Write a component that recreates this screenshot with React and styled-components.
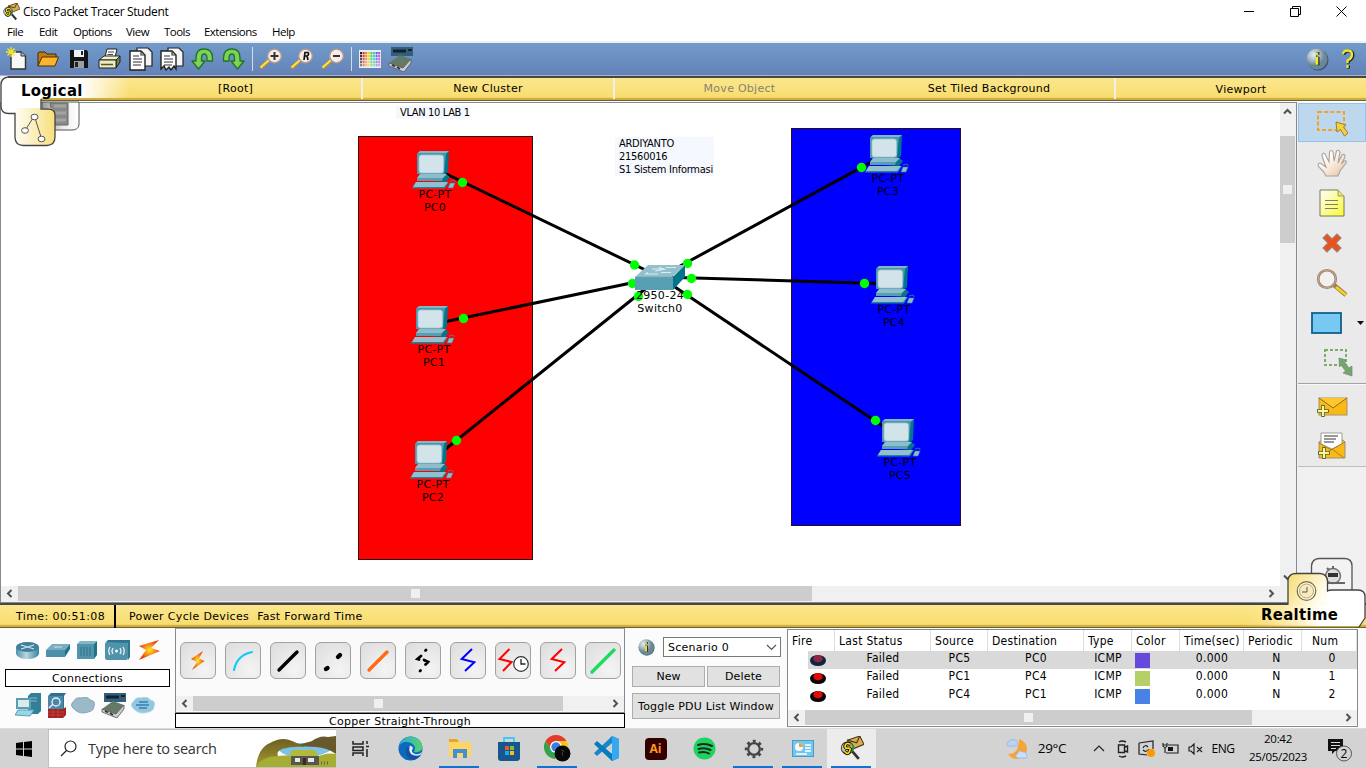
import React from "react";
import styled, { createGlobalStyle } from "styled-components";

const verdana = `"DejaVu Sans", Verdana, sans-serif`;
const tahoma = `"DejaVu Sans Condensed", "DejaVu Sans", Tahoma, sans-serif`;
const segoe = `"Open Sans", "Segoe UI", sans-serif`;

const Global = createGlobalStyle`
  *{box-sizing:border-box}
  html,body{margin:0;padding:0;overflow:hidden;background:#f0f0f0}
  svg{display:block;flex:none}
`;

const Desktop = styled.div`
  width: 1366px; height: 768px; display: flex; flex-direction: column;
  position: relative; overflow: hidden; background: #f0f0f0; color: #000;
  font: 11px/13px ${verdana}; letter-spacing: .27px;
`;
const Text = styled.span`
  white-space: nowrap; letter-spacing: ${p => p.$ls || 0}px;
`;

/* ---------- window chrome ---------- */
const TitleBar = styled.header`
  height: 23px; background: #fff; display: flex; align-items: center; padding: 0 2px;
  font: 12px/16px ${segoe};
`;
const AppName = styled(Text)`margin-left: 3px; flex: 1;`;
const WindowButton = styled.div`
  width: 46px; height: 21px; display: flex; align-items: center; justify-content: center;
`;
const MenuBar = styled.nav`
  height: 20px; background: #fff; border-bottom: 2px solid #f0f0f0; display: flex;
  padding-left: 7px; font: 11.5px/18px ${segoe};
`;
const MenuItem = styled.span`width: ${p => p.$w}px; letter-spacing: ${p => p.$ls || 0}px; white-space: nowrap;`;
const Toolbar = styled.div`
  height: 33px; display: flex; align-items: center; padding: 0 2px 0 1px;
  background: linear-gradient(#729bc9, #6382b9);
  border-bottom: 1px solid #a9b4c4;
`;
const ToolButton = styled.div`
  width: 31px; height: 31px; display: flex; align-items: center; justify-content: center;
`;
const ToolSeparator = styled.div`width: 6px; height: 24px; display: flex; justify-content: center; &::after{content:"";width:1px;background:#d4dbe6}`;
const Spacer = styled.div`flex: 1;`;

/* ---------- yellow bars ---------- */
const GoldBar = styled.div`
  display: flex; height: 25px; border-top: 2px solid #474643; border-bottom: 1px solid #6d6134;
  background: linear-gradient(#fbe68e 0, #fae17c 50%, #f8dd6e 88%, #d2b040 92%, #cdaa3c 100%);
`;
const BarCell = styled.div`
  width: ${p => p.$w}px; height: 21px; display: flex; justify-content: center; padding-top: ${p => p.$pt || 4}px;
  border-right: ${p => p.$last ? 0 : 2}px solid #f2efe8; color: ${p => p.$dim ? "#858474" : "#000"};
`;
const LogicalTab = styled.div`position: absolute; left: 0; top: 75px;`;
const TabName = styled.div`
  position: absolute; left: ${p => p.$x}px; top: ${p => p.$y}px; font: bold 16.5px/19px ${tahoma}; letter-spacing: .35px;
`;
const RealtimeTab = styled.div`position: absolute; left: 1240px; top: 556px;`;

/* ---------- workspace ---------- */
const Workspace = styled.main`
  height: 502px; display: flex; border-top: 1px solid #fff;
`;
const CanvasFrame = styled.section`
  width: 1297px; border: 1px solid #848a93; display: grid;
  grid-template: 483px 15px / 1279px 16px;
`;
const Canvas = styled.div`position: relative; background: #fff; overflow: hidden;`;
const Layer = styled.svg`position: absolute; left: 0; top: 0;`;
const Zone = styled.div`
  position: absolute; left: ${p => p.$x - 1}px; top: ${p => p.$y - 103}px; width: ${p => p.$w}px; height: ${p => p.$h}px;
  background: ${p => p.$c}; border: 1px solid #2b1010;
`;
const Node = styled.div`
  position: absolute; left: ${p => p.$x - 1}px; top: ${p => p.$y - 103}px; width: 50px;
`;
const NodeLabel = styled.div`
  width: 60px; margin: -1px 0 0 ${p => p.$dx}px; text-align: center; line-height: 13px; white-space: pre;
`;
const Note = styled.div`
  position: absolute; left: ${p => p.$x - 1}px; top: ${p => p.$y - 103}px; width: ${p => p.$w}px; padding-left: 4px;
  background: #f6f8ff; font: 11px/13px ${tahoma}; white-space: pre; letter-spacing: ${p => p.$ls}px;
`;

/* ---------- scroll bars ---------- */
const Track = styled.div`
  display: flex; background: #f0f0f0; align-items: stretch;
  flex-direction: ${p => p.$v ? "column" : "row"};
  ${p => p.$v ? "width:15px" : "height:15px"};
`;
const Thumb = styled.div`
  ${p => p.$v ? "height" : "width"}: ${p => p.$size}px; background: #cdcdcd;
  margin-top: ${p => p.$from || 0}px;
  display: flex; align-items: center; justify-content: center;
  &::after{content:"";width:9px;height:9px;background:#f0f0f0}
`;
const ArrowBox = styled.div`
  width: ${p => p.$w || 15}px; height: ${p => p.$h || 15}px; display: flex; align-items: center; justify-content: center;
`;
const ArrowSvg = styled.svg`transform: rotate(${p => p.$dir}deg);`;
const Arrow = ({ dir }) => (
  <ArrowSvg width="9" height="9" viewBox="0 0 9 9" $dir={dir}>
    <path d="M6.5 1 3 4.5 6.5 8" fill="none" stroke="#505050" strokeWidth="2" />
  </ArrowSvg>
);

/* ---------- side tools ---------- */
const SideBar = styled.aside`width: 69px; padding-left: 1px; background: #f0f0f0;`;
const SideGroup = styled.div`
  background: #eaeaea; border-bottom: 1px solid ${p => p.$line}; border-top: 1px solid #f8f8f8; height: ${p => p.$h}px;
`;
const SideTool = styled.div`
  height: ${p => p.$h || 40}px; padding-left: ${p => p.$pl || 0}px; display: flex; align-items: center; justify-content: center;
  ${p => p.$on && "background:#bcd7ee;border:1px solid #90c3ee;margin-bottom:1px;"}
`;

/* ---------- lower panels ---------- */
const StatusCell = styled.div`
  width: 116px; height: 24px; margin-right: 13px; padding: 5px 0 0 16px; border-right: 2px solid #000; letter-spacing: .4px; white-space: nowrap;
`;
const StatusItem = styled(Text)`padding-top: 5px; margin-right: 8px;`;
const Lower = styled.section`height: 100px; display: flex; background: #fbfbfb;`;
const DeviceBox = styled.div`width: 175px; padding: 10px 0 0 5px; background: #fcfcfc;`;
const DeviceRow = styled.div`display: flex; height: ${p => p.$h}px; align-items: center; padding-left: ${p => p.$pl}px; gap: ${p => p.$gap}px;`;
const SelectedName = styled.div`
  width: 165px; height: 18px; border: 1px solid #000; background: #fff; text-align: center; line-height: 17px;
`;
const DeviceName = styled(SelectedName)`margin-top: 7px;`;
const CableBox = styled.div`width: 450px; display: flex; flex-direction: column; background:#fafafa;`;
const CableScroll = styled.div`border: 1px solid #848a93; border-top-color:#a4a7ac; height: 85px; display: flex; flex-direction: column;`;
const CableRow = styled.div`height: 67px; display: flex; gap: 9px; padding: 13px 0 0 3.5px;`;
const CableButton = styled.div`
  width: 36px; height: 37px; border: 1px solid #a2a2a2; border-radius: 6px; display: flex; align-items: center; justify-content: center;
  background: radial-gradient(circle at 70% 75%, #f4f4f4, #dcdcdc); flex: none;
`;
const CableName = styled(SelectedName)`width: 450px; height: 15px; line-height: 15px; background: #fdfdfd;`;
const PduBox = styled.div`width: 162px; padding: 9px 7px 0 7px; display: flex; flex-direction: column;`;
const PduRow = styled.div`display: flex; gap: 2px; align-items: center; margin-bottom: ${p => p.$mb}px; padding-left: ${p => p.$pl || 0}px;`;
const Select = styled.div`
  width: 118px; height: 20px; margin: 0 -1px 0 auto; border: 1px solid #777; background: #fff; display: flex; align-items: center;
  justify-content: space-between; padding: 1px 3px 0 4px;
`;
const Button = styled.button`
  width: ${p => p.$w}px; height: ${p => p.$h}px; padding: 0; border: 1px solid #adadad; background: #e1e1e1; font: 11px/13px ${verdana};
  letter-spacing: ${p => p.$ls || 0}px; white-space: nowrap; color: #000;
`;
const TableBox = styled.div`
  width: 571px; height: 98px; margin-top: 1px; border: 1px solid #848a93; background: #fff; display: flex; flex-direction: column;
  font: 12px/13px ${tahoma}; letter-spacing: .3px;
`;
const cols = "47px 96px 57px 96px 48px 48px 64px 58px 1fr";
const HeadRow = styled.div`display: grid; grid-template-columns: ${cols}; height: 21px;`;
const HeadCell = styled.div`border-right: 1px solid #dedede; padding: 5px 0 0 ${p => p.$pl || 4}px; white-space: nowrap;`;
const DataRow = styled(HeadRow)`
  height: 18px; background: ${p => p.$on ? "linear-gradient(90deg,#fff 20px,#d9d9d9 20px)" : "#fff"};
`;
const DataCell = styled.div`text-align: center; padding: 1px 0 0 ${p => p.$pl || 0}px;`;
const FireCell = styled.div`padding: 3px 0 0 22px;`;
const Swatch = styled.div`width: 15px; height: 15px; margin: 2px 0 0 3px; background: ${p => p.$c};`;
const TableEnd = styled.div`margin: auto 0 1px;`;

/* ---------- taskbar ---------- */
const Taskbar = styled.footer`
  height: 40px; display: flex; background: #d3d3d3; border-top: 1px solid #dcdcdc; font-family: ${segoe}; letter-spacing: 0;
`;
const StartButton = styled.div`width: 48px; display: flex; align-items: center; justify-content: center;`;
const Search = styled.div`
  width: 288px; height: 39px; background: #fff; border: 1px solid #c0c0c0; border-right: 0; display: flex; align-items: center; padding-left: 11px;
  font-size: 14.5px; color: #333;
`;
const SearchText = styled(Text)`margin-left: 11px; flex: 1;`;
const SearchArt = styled.div`align-self: flex-end;`;
const TaskItem = styled.div`
  width: ${p => p.$w || 49}px; display: flex; align-items: center; justify-content: center; position: relative; background: ${p => p.$on ? "#ececec" : "none"};
  &::after{content:"";position:absolute;left:4px;right:5px;bottom:0;height:2px;background:${p => p.$run ? "#0b74d4" : "none"}}
`;
const Tray = styled.div`display: flex; align-items: center; font-size: 12px; height: 39px;`;
const TraySlot = styled.div`
  width: ${p => p.$w}px; padding-right: ${p => p.$pr || 0}px; display: flex; justify-content: center; white-space: nowrap;
  letter-spacing: ${p => p.$ls || 0}px; font-size: ${p => p.$fs || 12}px;
`;
const Clock = styled.div`width: 80px; text-align: center; font-size: 11.5px; line-height: 18px; letter-spacing: -.3px; margin-top: -2px;`;

/* ================= icons ================= */
const PacketIcon = ({ s = 18 }) => (
  <svg width={s} height={s} viewBox="0 0 24 24">
    <path d="M8 4 20 0 24 8 12 13z" fill="#d9ad55" stroke="#4a3610" />
    <path d="M8 4 17 6.500 20 0" fill="none" stroke="#4e3b12" strokeWidth="1.200" />
    <path d="M13 15 19 22" stroke="#333" strokeWidth="2.600" />
    <circle cx="8" cy="11.500" r="5.800" fill="#a9b59a" fillOpacity=".6" stroke="#444" strokeWidth="1" />
    <path d="M13 9Q15 11 12 14" stroke="#1d9a2a" strokeWidth="1.800" fill="none" />
    <path d="M11 8Q7 6 6 9T8.500 11.700 10 15 5 14.500" fill="none" stroke="#111" strokeWidth="3.400" />
    <path d="M11 8Q7 6 6 9T8.500 11.700 10 15 5 14.500" fill="none" stroke="#ffe000" strokeWidth="1.600" />
  </svg>
);
const Pc = () => (
  <svg width="44" height="38" viewBox="0 0 44 38">
    <path d="M6 3 8 0H37L36 21 32 24z" fill="#00758c" />
    <path d="M5 2.500 8 0H37L34 2.500z" fill="#84b6c6" />
    <path d="M5 2.500H34L32 23H5z" fill="#4b98af" />
    <rect x="7" y="4" width="24.500" height="18" rx="2.500" fill="#d3e3ea" stroke="#9fc5d2" strokeWidth=".8" />
    <path d="M8 23H34L38 26 34 31 5 29z" fill="#08748c" />
    <path d="M8 23H35L31 27H5z" fill="#8dbccb" /><path d="M5 27H31L30 30H5z" fill="#559eb4" />
    <path d="M0 37 4 31H37L33 37.500H0z" fill="#23839c" /><path d="M4 31H36L32 36H1z" fill="#94bfce" />
    <path d="M38 30Q44 28 43 31" fill="none" stroke="#55828f" strokeWidth=".8" />
    <path d="M38 32H43L41 37H36z" fill="#8dbccb" stroke="#23839c" strokeWidth=".6" />
  </svg>
);
const Switch = () => (
  <svg width="50" height="25" viewBox="0 0 50 25">
    <path d="M0 12 13 0H50L37 12z" fill="#94bfcd" /><path d="M50 0V12L38 25V12z" fill="#00758c" /><path d="M0 12H38V25H0z" fill="#599fb4" />
    <path d="M17 4H28M24 2.500 29 4M12 9H23M13 7.500 10 9.500M31 2.500H41M26 7.500H36M20 6 31 4" stroke="#dcebf0" strokeWidth="1.200" fill="none" />
    <path d="M0 12H38L50 0" fill="none" stroke="#6aa9bc" strokeWidth=".7" />
  </svg>
);
const NewIcon = () => <svg width="22" height="24" viewBox="0 0 22 24"><path d="M5 5H15L19.500 9V22H5z" fill="#f7f7f7" stroke="#333" strokeWidth="1.400" /><path d="M15 5V9H19.500" fill="#bbb" stroke="#333" /><path d="M5 0V10M0 5H10M1.500 1.500 8.500 8.500M8.500 1.500 1.500 8.500" stroke="#f5e623" strokeWidth="1.300" /></svg>;
const OpenIcon = () => <svg width="22" height="20" viewBox="0 0 22 20"><path d="M1 17V4L2 3H8L10 5H19V8" fill="#c07b10" stroke="#3a2a10" /><path d="M1 17 5 8H21.500L18 17z" fill="#fcb42c" stroke="#4a3208" /></svg>;
const SaveIcon = () => <svg width="20" height="20" viewBox="0 0 20 20"><path d="M1 1H17.500L19 2.500V19H1z" fill="#151515" /><path d="M5 1H15V8H5z" fill="#eef1f5" /><path d="M12 2H14V6H12z" fill="#222" /><path d="M5 12H15V19H5z" fill="#9aa0a8" /><path d="M6 13H9V18H6z" fill="#222" /></svg>;
const PrintIcon = () => <svg width="23" height="22" viewBox="0 0 23 22"><path d="M7 9 9 1H19L17 9z" fill="#fff" stroke="#222" /><path d="M10 4H16M9.500 6.500H15" stroke="#444" /><path d="M1 12 6 8H22L18 12z" fill="#f2f2c8" stroke="#222" /><path d="M22 8V14L18 20V12z" fill="#777b52" stroke="#222" /><path d="M1 12H18V20H1z" fill="#ececbf" stroke="#222" /><path d="M3 16.500H15" stroke="#55562f" strokeWidth="1.500" /></svg>;
const PagesIcon = ({ torn }) => <svg width="24" height="24" viewBox="0 0 24 24"><path d="M8 1H19L23 5V19H8z" fill="#f4f4f4" stroke="#222" strokeWidth="1.200" /><path d={torn ? "M1 4H12L16 8V22L14 19 11 23 9 20 6 23 4 19 1 22z" : "M1 4H12L16 8V23H1z"} fill="#fff" stroke="#222" strokeWidth="1.400" /><path d="M12 4V8H16M4 9H10M4 12H13M4 15H13M4 18H12" fill="none" stroke="#333" strokeWidth="1.200" /></svg>;
const TurnIcon = ({ flip }) => <svg width="23" height="22" viewBox="0 0 23 22"><path transform={flip ? "translate(23 0) scale(-1 1)" : undefined} d="M5 13V10Q5 1 13 1 21.500 1 21.500 10V13H16V10Q16 6 13 6 10.500 6 10.500 10V13H14L7.500 21 1 13z" fill="#7dd35a" stroke="#21741d" strokeWidth="1.300" strokeLinejoin="round" /></svg>;
const Magnifier = ({ kind }) => (
  <svg width="24" height="22" viewBox="0 0 24 22"><path d="M1.500 20 10 12.500" stroke="#c99a1e" strokeWidth="3.400" /><path d="M1.500 19.500 10 12" stroke="#ffe14a" strokeWidth="1.800" />
    <circle cx="15.500" cy="8" r="6.800" fill="#f6ece6" stroke="#b79a8c" strokeWidth="1.300" />
    {kind === "R" ? <path d="M14 12 15 4.500H18Q19.500 6.500 17 8H15M17 8 18 12" fill="none" stroke="#111" strokeWidth="1.700" /> : <path d={kind === "+" ? "M11.500 8H19.500M15.500 4V12" : "M12 8H19"} stroke="#333" strokeWidth="2" />}
  </svg>
);
const PaletteIcon = () => (
  <svg width="22" height="18" viewBox="0 0 22 18"><rect width="22" height="18" fill="#eee" />
    {["#222", "#d23", "#e80", "#dd2", "#4c4", "#3cc", "#46e", "#c4c"].flatMap((c, i) => [0, 1, 2, 3, 4].map(r => <rect key={c + r} x={1 + i * 2.6} y={2 + r * 3} width="2" height="2.300" fill={c} opacity={1 - r * .12} />))}
  </svg>
);
const ModularIcon = ({ w = 25 }) => <svg width={w} height={w} viewBox="0 0 25 25"><path d="M3 0H25V9H3z" fill="#315f7c" /><path d="M5 4H18" stroke="#14202c" strokeWidth="3" /><path d="M20 2H24V4H20z" fill="#222" /><path d="M1 16 12 8 23 12 15 21z" fill="#647a68" /><path d="M1 16 15 21 23 12V16L16 25 1 19z" fill="#ccc" stroke="#555" strokeWidth=".8" /><path d="M4 18 7 19.500M9 20 12 22" stroke="#333" strokeWidth="1.700" /></svg>;
const InfoIcon = ({ s }) => (
  <svg width={s} height={s} viewBox="0 0 24 24"><defs><radialGradient id={"ball" + s} cx=".35" cy=".3"><stop stopColor="#e3edf0" /><stop offset=".55" stopColor="#a9bcc5" /><stop offset="1" stopColor="#6a8798" /></radialGradient></defs>
    <circle cx="12.500" cy="12.500" r="11" fill="#2a4354" opacity=".8" /><circle cx="11.500" cy="11.500" r="11" fill={`url(#ball${s})`} /><path d="M12.500 4.500V7M12.500 9V18M10.500 9.500H12" stroke="#222" strokeWidth="3.200" /><path d="M11.500 5V7M11.500 9V17.500" stroke="#f2ed2b" strokeWidth="2.600" /></svg>
);
const HelpIcon = () => <svg width="20" height="22" viewBox="0 0 18 22"><g fill="none" strokeWidth="3"><path d="M4 7Q4 3 8.500 3 13 3 13 7T8.500 13V15.500M8.500 17.500V20.500" stroke="#222" /><path d="M3 6.500Q3 2.500 7.500 2.500 12 2.500 12 6.500T7.500 12.500V15M7.500 17V20" stroke="#ece82c" strokeWidth="2.300" /></g></svg>;

const SelectIcon = () => <svg width="32" height="28" viewBox="0 0 32 28"><rect x="2" y="3" width="26" height="18" fill="none" stroke="#f6a21d" strokeWidth="2" strokeDasharray="4 2.200" /><path d="M20 13 30 16 27.500 18 32 24 28.500 27 24.500 20.500 21 23z" fill="#f5d13a" stroke="#997b34" /></svg>;
const HandIcon = () => <svg width="30" height="28" viewBox="0 0 30 28"><defs><linearGradient id="skin" x2="1" y2="1"><stop offset=".3" stopColor="#fff" /><stop offset="1" stopColor="#e7bd98" /></linearGradient></defs><path d="M9 27Q7 22 2 18 0 15 3 14L9 18Q6 10 5 6 6 3 8 5L12 13 12.500 3Q14 0 16 3L17 12 19.500 2Q21.500 0 23 3L21 14 25 6Q28 4 28 8L24.500 15 27 12Q30 11 29 14L23 22 21 27z" fill="url(#skin)" stroke="#aaa29d" strokeWidth="1.100" /></svg>;
const NoteIcon = () => <svg width="26" height="28" viewBox="0 0 26 28"><defs><linearGradient id="paper" x2="1" y2="1"><stop stopColor="#fff" /><stop offset="1" stopColor="#f9f92f" /></linearGradient></defs><path d="M1 1H19L25 7V27H1z" fill="url(#paper)" stroke="#77775f" /><path d="M19 1V7H25" fill="#e8e874" stroke="#999960" /><path d="M6 11.500H19M6 15.500H19M6 19.500H19" stroke="#817d68" strokeWidth="1.200" /></svg>;
const DeleteIcon = () => <svg width="20" height="20" viewBox="0 0 20 20"><path d="M5 1 10 6 15 1 19 5 14 10 19 15 15 19 10 14 5 19 1 15 6 10 1 5z" fill="#e8541f" stroke="#a67c6e" strokeWidth="1.100" /></svg>;
const InspectIcon = () => <svg width="32" height="30" viewBox="0 0 32 30"><path d="M18 17 30 27" stroke="#9b8250" strokeWidth="4.500" /><path d="M20 19 30 27" stroke="#fbd018" strokeWidth="2.600" /><circle cx="11" cy="11" r="8.800" fill="#f3f1f0" stroke="#9b8374" strokeWidth="2.600" /><circle cx="11" cy="11" r="8.800" fill="none" stroke="#d0aa85" strokeWidth=".9" /></svg>;
const ShapeIcon = () => <svg width="54" height="22" viewBox="0 0 54 22"><rect x="1" y="1" width="29" height="20" fill="#77c9f4" stroke="#11608b" strokeWidth="1.800" /><path d="M46 9H53L49.500 13z" fill="#111" /></svg>;
const ResizeIcon = () => <svg width="32" height="30" viewBox="0 0 32 30"><path d="M3 3H24V18H3z" fill="none" stroke="#79ad69" strokeWidth="2" strokeDasharray="3 2" /><path d="M17 11 24 13 22.500 15 27 21 30 19V29L21 26 23.500 24 19 18 17.500 20z" fill="#72a66b" stroke="#6e8e6d" strokeWidth=".7" /></svg>;
const MailIcon = ({ open }) => (
  <svg width="32" height="28" viewBox="0 0 32 28">
    {open ? <><path d="M3 10 6 8H27L29 10V26H3z" fill="#fbb914" stroke="#9a8e7c" /><path d="M5 1H26V12L16 17 5 12z" fill="#fff" stroke="#9b9b95" /><path d="M8 4H14M8 7H20M8 10H18M12 4H22" stroke="#777" strokeWidth="1.500" /><path d="M3 11 15 18 29 10M12 20 16 17 28 26" fill="none" stroke="#a88230" /></> :
      <><rect x="3" y="4" width="28" height="17" fill="#fbb914" stroke="#a29272" /><path d="M3 4 17 14 31 4" fill="#ffc72c" stroke="#8a6a2a" /></>}
    <path d={open ? "M2 21H14M8 15V27" : "M1 17H13M7 11V23"} stroke="#5d6a24" strokeWidth="3.600" /><path d={open ? "M3 21H13M8 16V26" : "M2 17H12M7 12V22"} stroke="#f4f7a8" strokeWidth="2" />
  </svg>
);

const Bolt = ({ w = 24, h = 20, id }) => <svg width={w} height={h} viewBox="0 0 24 20" preserveAspectRatio="none"><defs><radialGradient id={id}><stop stopColor="#ffe920" /><stop offset="1" stopColor="#ea3a16" /></radialGradient></defs><path d="M22 0 2 6 9 10 2 20 23 11 14 8z" fill={`url(#${id})`} /></svg>;
const SmallBolt = () => <svg width="15" height="19" viewBox="0 0 15 19"><defs><radialGradient id="spark"><stop stopColor="#ffe920" /><stop offset="1" stopColor="#ea3a16" /></radialGradient></defs><path d="M13 0 1 8 7 11 2 19 14.500 10 9 7.500z" fill="url(#spark)" /></svg>;
const Router = () => <svg width="23" height="17" viewBox="0 0 23 17"><defs><linearGradient id="drum"><stop stopColor="#4f93ab" /><stop offset=".45" stopColor="#b9d6e0" /><stop offset="1" stopColor="#3a839c" /></linearGradient></defs><path d="M0 5V12Q2 17 11.500 17T23 12V5z" fill="url(#drum)" /><ellipse cx="11.500" cy="5" rx="11.500" ry="5" fill="#407f9e" /><path d="M5 3 18 7M18 3 5 7" fill="none" stroke="#d7e8ee" strokeWidth="1.200" /></svg>;
const SmallSwitch = () => <svg width="24" height="13" viewBox="0 0 24 13"><path d="M0 6 6 0H24L19 6z" fill="#78adbf" /><path d="M24 0V5L19 13V6z" fill="#1c7188" /><path d="M0 6H19V13H0z" fill="#4d90a7" /><path d="M8 3H16" stroke="#cfe2e9" /></svg>;
const Hub = () => <svg width="20" height="18" viewBox="0 0 20 18"><path d="M0 3 3 0H20L17 3z" fill="#83b6c6" /><path d="M20 0V14L17 18V3z" fill="#217288" /><path d="M0 3H17V18H0z" fill="#5295ab" /><path d="M4 6V15M7 6V15M10 6V15M13 6V15" stroke="#2f7088" /></svg>;
const Wireless = () => <svg width="26" height="20" viewBox="0 0 26 20"><rect x="1" y="2" width="23" height="18" rx="2" fill="#4f93ab" /><path d="M2 2 4 0H26V17L24 20V3z" fill="#2f7590" /><g fill="none" stroke="#e6f2f5" strokeWidth="1.300"><path d="M9 8Q7 11 9 14M6 7Q3.500 11 6 15M16 8Q18 11 16 14M19 7Q21.500 11 19 15" /></g><circle cx="12.500" cy="11" r="1.500" fill="#fff" /></svg>;
const EndDevice = () => <svg width="26" height="24" viewBox="0 0 26 24"><path d="M13 3 16 0H26V18L23 21H13z" fill="#327f97" /><path d="M2 6H15V15H2z" fill="#dceaee" stroke="#5a9db0" strokeWidth="2" /><path d="M0 22 3 17H19L15 23z" fill="#9cd4e7" stroke="#50a1b8" /><path d="M15 5H22M15 8H22" stroke="#85bccd" /></svg>;
const Firewall = () => <svg width="19" height="25" viewBox="0 0 19 25"><path d="M1 3 4 0H19L17 3V24H1z" fill="#316f90" /><path d="M1 3H16V16H1z" fill="#4889a6" /><path d="M1 16H16L19 14V22L16 25H1z" fill="#a42424" /><circle cx="9" cy="9" r="4" fill="none" stroke="#eef" strokeWidth="1.300" /><path d="M6 11 2 15" stroke="#eef" strokeWidth="1.500" /><path d="M1 19H17M1 22H17M6 16V25M11 16V25" stroke="#d24b45" strokeWidth=".6" /></svg>;
const Cloud = ({ lines }) => <svg width="24" height="17" viewBox="0 0 24 17"><path d="M3 12Q-2 8 3 4 5 0 10 1 17-1 19 3 25 4 23 9 23 14 17 15 9 18 3 12z" fill={lines ? "#91c7e0" : "#9bb9c7"} stroke={lines ? "#a9d4e6" : "#84a7b7"} />{lines && <path d="M8 5H17M5 8H18M8 11H16" stroke="#3c7dac" strokeWidth="1.300" />}</svg>;

const Zigzag = ({ c, clock }) => <svg width="32" height="28" viewBox="0 0 32 28"><path d={clock ? "M12.500 2 2.500 12 14.500 15 6 24" : "M20 2 9.700 12 22.300 15.300 13 24"} fill="none" stroke={c} strokeWidth="2" />{clock && <><circle cx="24" cy="17" r="7.300" fill="#fff" stroke="#333" strokeWidth="1.200" /><path d="M24 12V17H28.500" fill="none" stroke="#222" strokeWidth="1.300" /></>}</svg>;
const Wire = ({ d, c, w = 3.4 }) => <svg width="30" height="30" viewBox="0 0 30 30"><path d={d} fill="none" stroke={c} strokeWidth={w} strokeLinecap="round" /></svg>;

const FireBall = ({ dim }) => <svg width="16" height="12" viewBox="0 0 16 12"><ellipse cx="8" cy="6.500" rx="8" ry="5.500" fill={dim ? "#10253f" : "#0d0505"} /><ellipse cx="8" cy="4.700" rx="4.600" ry="3.700" fill={dim ? "#8f2644" : "#e00c08"} /></svg>;

const Landscape = () => (
  <svg width="80" height="31" viewBox="0 0 80 31">
    <defs><linearGradient id="hill" x2="0" y2="1"><stop stopColor="#6d5e22" /><stop offset="1" stopColor="#a39a34" /></linearGradient></defs>
    <path d="M22 11Q40 5 58 8L78 12Q66 22 40 22 22 18 22 11z" fill="#7cc3e6" />
    <path d="M0 31Q2 12 14 7 26 0 36 5 46 9 50 11 36 10 26 13 18 17 24 22L20 31z" fill="url(#hill)" />
    <path d="M42 9Q52 6 56 5 64-1 72 1L80 0V18Q72 12 60 11 50 11 42 9z" fill="#67592b" />
    <path d="M0 31Q6 20 22 20 40 18 58 22 70 16 80 18V31z" fill="#a6ad33" /><path d="M36 14H59L63 21H33z" fill="#b3b93c" /><path d="M35 20H63V29H35z" fill="#5b564a" /><path d="M39 22H44V26H39M52 22H58V26H52z" fill="#dfe9ef" /><path d="M47 22H50V29H47z" fill="#332a22" /><path d="M65 27 74 27" stroke="#6b6a2b" strokeWidth="3" strokeDasharray="1 2" />
  </svg>
);
const TaskViewIcon = () => <svg width="18" height="18" viewBox="0 0 18 18"><path d="M1 1V4H11V1M1 16V13H11V16M1 7H11V10.500H1zM15 1V4M15 9V17M14 6.500H17" fill="none" stroke="#222" strokeWidth="1.500" /></svg>;
const Edge = () => <svg width="25" height="25" viewBox="0 0 25 25"><defs><linearGradient id="edge" x2="1"><stop stopColor="#2da7df" /><stop offset="1" stopColor="#54d36b" /></linearGradient></defs><circle cx="12.500" cy="12.500" r="12" fill="#0c69bd" /><path d="M1 10Q3 1 13 .500 24 2 24.500 11 24 17 16 16 19 10 13 7 5 4 1 10z" fill="url(#edge)" /><path d="M10 11Q13 8 15 12 12 16 17 18 21 19 24 16 20 24 13 23 7 19 10 11z" fill="#e1ecf3" /><path d="M9 11Q6 22 15 24 20 23 23 19 17 21 13 18 10 14 12 10z" fill="#1750a2" /></svg>;
const Explorer = () => <svg width="22" height="19" viewBox="0 0 22 19"><path d="M0 0H8L10 3H22V18H0z" fill="#e8a51f" /><path d="M0 3H22V18H0z" fill="#ffd561" /><path d="M4 10H18V19H14V14H8V19H4z" fill="#3f91d5" /></svg>;
const Store = () => <svg width="24" height="24" viewBox="0 0 24 24"><path d="M7 6V1H17V6" fill="none" stroke="#42c8f5" strokeWidth="1.800" /><path d="M1 5H23V22Q22 24 20 24H4Q1 24 1 21z" fill="#17568f" /><path d="M8 9H12V13H8z" fill="#f05325" /><path d="M13 9H17V13H13z" fill="#7fc02c" /><path d="M8 14H12V18H8z" fill="#1ca7e8" /><path d="M13 14H17V18H13z" fill="#fdbb15" /></svg>;
const Chrome = () => <svg width="27" height="27" viewBox="0 0 27 27"><circle cx="12" cy="12" r="12" fill="#fbc116" /><path d="M1.600 6A12 12 0 0 1 22.400 6H12L7 14z" fill="#e33b2e" /><path d="M1.600 6A12 12 0 0 0 11 24L16 15 7 14z" fill="#32a350" /><circle cx="12" cy="12" r="6" fill="#fff" /><circle cx="12" cy="12" r="4.700" fill="#377fe0" /><circle cx="18.500" cy="18.500" r="8" fill="#080808" /><path d="M17 15 20 16 18 18 19 21" stroke="#3b3b3b" fill="none" /></svg>;
const Code = () => <svg width="25" height="25" viewBox="0 0 25 25"><path d="M18 0 25 3V22L18 25 14 20 18 17V7L3 20 0 17 14 4z" fill="#1686ce" /><path d="M3 5 18 18V25L0 8z" fill="#087bc0" /><path d="M18 0 25 3V22L18 25z" fill="#36a8ee" /></svg>;
const AiBox = styled.div`width: 22px; height: 22px; border-radius: 4px; background: #300; color: #ff9a1e; font: bold 12px/21px ${segoe}; text-align: center;`;
const Spotify = () => <svg width="23" height="23" viewBox="0 0 23 23"><circle cx="11.500" cy="11.500" r="11" fill="#1ed35f" /><path d="M5 8Q12 5.500 19 9M5.500 12Q12 10 17.500 13M6 15.500Q11.500 14 16 16.500" fill="none" stroke="#172b1d" strokeWidth="2" strokeLinecap="round" /></svg>;
const Gear = () => <svg width="20" height="20" viewBox="0 0 20 20"><circle cx="10" cy="10" r="5.800" fill="none" stroke="#444" strokeWidth="2.200" /><circle cx="10" cy="10" r="7.900" fill="none" stroke="#444" strokeWidth="2.600" strokeDasharray="2.900 3.304" strokeDashoffset="1.450" /></svg>;
const Panel = () => <svg width="22" height="17" viewBox="0 0 22 17"><rect x=".5" y=".5" width="21" height="16" fill="#75c6ec" stroke="#4a9bca" /><circle cx="7" cy="7" r="4" fill="#f5fafd" /><path d="M7 7V3A4 4 0 0 1 11 7z" fill="#f0a52f" /><path d="M13 5H19M13 8H19M13 11H19M4 14H15" stroke="#fff" strokeWidth="1.600" /></svg>;
const Weather = () => <svg width="24" height="24" viewBox="0 0 24 24"><path d="M14 2Q22 5 22 12T12 22Q6 22 3 17 14 18 14 2z" fill="#f6a534" /><path d="M3 9Q0 7 3 5 5 1 9 3 13 3 12 6 15 9 11 9z" fill="#b8d3f4" stroke="#8db1df" strokeWidth=".7" /><path d="M12 21Q9 19 12 17 14 12 18 15 21 14 21 17 24 20 21 21z" fill="#cadffb" stroke="#8eafd9" strokeWidth=".7" /></svg>;

const line = { fill: "none", stroke: "#222", strokeWidth: 1.2 };

const pcs = [["PC0", 412, 151], ["PC1", 411, 306], ["PC2", 410, 441], ["PC3", 865, 135], ["PC4", 871, 266], ["PC5", 877, 419]];
const links = [[434, 168], [434, 324], [432, 460], [888, 153], [894, 284], [899, 437]];
const ports = [[462, 182], [463, 318], [456, 440], [634, 264.5], [632, 283], [638, 296], [687, 263], [691, 278], [687, 294], [861, 167], [864, 283], [875, 420]];
const menus = [["File", 32], ["Edit", 34], ["Options", 53], ["View", 38], ["Tools", 40], ["Extensions", 68], ["Help", 30]];
const tools = [["new", NewIcon], ["open", OpenIcon], ["save", SaveIcon], ["print", PrintIcon], ["copy", PagesIcon]];
const headers = ["Fire", "Last Status", "Source", "Destination", "Type", "Color", "Time(sec)", "Periodic", "Num"];
const pdus = [["PC5", "PC0", "#6548dc", 0], ["PC1", "PC4", "#b5cf69", 1], ["PC4", "PC1", "#4882e6", 2]];

const HScroll = ({ size }) => (
  <Track><ArrowBox $w={17}><Arrow dir={0} /></ArrowBox><Thumb $size={size} /><Spacer /><ArrowBox $w={17}><Arrow dir={180} /></ArrowBox></Track>
);

export default function App() {
  return (
    <Desktop>
      <Global />
      <TitleBar>
        <PacketIcon /><AppName $ls={-0.36}>Cisco Packet Tracer Student</AppName>
        <WindowButton><svg width="11" height="11"><path d="M0 5.500H10" stroke="#000" /></svg></WindowButton>
        <WindowButton><svg width="11" height="11"><path d="M.5 2.500H8.500V10.500H.5zM2.500 2.500V.5H10.500V8.500H8.500" fill="none" stroke="#000" /></svg></WindowButton>
        <WindowButton><svg width="11" height="11"><path d="M.5.5 10.500 10.500M10.500.5.5 10.500" stroke="#000" /></svg></WindowButton>
      </TitleBar>
      <MenuBar>{menus.map(([m, w]) => <MenuItem key={m} $w={w} $ls={-0.52}>{m}</MenuItem>)}</MenuBar>
      <Toolbar>
        {tools.map(([name, Icon]) => <ToolButton key={name}><Icon /></ToolButton>)}
        <ToolButton><PagesIcon torn /></ToolButton>
        <ToolButton><TurnIcon /></ToolButton>
        <ToolButton><TurnIcon flip /></ToolButton>
        <ToolSeparator />
        {["+", "R", "-"].map(k => <ToolButton key={k}><Magnifier kind={k} /></ToolButton>)}
        <ToolSeparator />
        <ToolButton><PaletteIcon /></ToolButton><ToolButton><ModularIcon /></ToolButton>
        <Spacer />
        <ToolButton><InfoIcon s={23} /></ToolButton><ToolButton><HelpIcon /></ToolButton>
      </Toolbar>
      <GoldBar>
        <BarCell $w={110} $last />
        <BarCell $w={253}>[Root]</BarCell>
        <BarCell $w={252}>New Cluster</BarCell>
        <BarCell $w={249} $dim $last>Move Object</BarCell>
        <BarCell $w={252}>Set Tiled Background</BarCell>
        <BarCell $w={250} $last $pt={5}>Viewport</BarCell>
      </GoldBar>

      <Workspace>
        <CanvasFrame>
          <Canvas>
            <Zone $x={358} $y={136} $w={175} $h={424} $c="#f00" />
            <Zone $x={791} $y={128} $w={170} $h={398} $c="#00f" />
            <Note $x={396} $y={106} $w={74} $ls={-0.35}>VLAN 10 LAB 1</Note>
            <Note $x={615} $y={137} $w={99} $ls={-0.26}>{"ARDIYANTO\n21560016\nS1 Sistem Informasi"}</Note>
            <Layer width="1279" height="483" viewBox="1 103 1279 483">
              {links.map(([x, y]) => <path key={x + "-" + y} d={`M${x} ${y}L660 277`} stroke="#000" strokeWidth="3" />)}
              {ports.map(([x, y]) => <circle key={x + "-" + y} cx={x + .5} cy={y + .5} r="4.700" fill="#0f0" />)}
            </Layer>
            <Node $x={635} $y={265}><Switch /><NodeLabel $dx={-5}>{"2950-24\nSwitch0"}</NodeLabel></Node>
            {pcs.map(([n, x, y]) => <Node key={n} $x={x} $y={y}><Pc /><NodeLabel $dx={-7}>{"PC-PT\n" + n}</NodeLabel></Node>)}
          </Canvas>
          <Track $v>
            <ArrowBox $h={17}><Arrow dir={90} /></ArrowBox>
            <Thumb $v $size={107} $from={16} />
            <Spacer />
            <ArrowBox $h={17}><Arrow dir={-90} /></ArrowBox>
          </Track>
          <HScroll size={794} />
        </CanvasFrame>
        <SideBar>
          <SideGroup $h={282} $line="#a3a3a3">
            <SideTool $on $h={39}><SelectIcon /></SideTool>
            <SideTool><HandIcon /></SideTool>
            <SideTool><NoteIcon /></SideTool>
            <SideTool><DeleteIcon /></SideTool>
            <SideTool><InspectIcon /></SideTool>
            <SideTool $pl={11}><ShapeIcon /></SideTool>
            <SideTool $pl={11} $h={38}><ResizeIcon /></SideTool>
          </SideGroup>
          <SideGroup $h={83} $line="#bdbdbd">
            <SideTool $h={46}><MailIcon /></SideTool>
            <SideTool $h={30}><MailIcon open /></SideTool>
          </SideGroup>
        </SideBar>
      </Workspace>

      <GoldBar>
        <StatusCell>Time: 00:51:08</StatusCell>
        <StatusItem $ls={0.34}>Power Cycle Devices</StatusItem><StatusItem $ls={0.3}>Fast Forward Time</StatusItem>
      </GoldBar>

      <Lower>
        <DeviceBox>
          <DeviceRow $h={24} $pl={11} $gap={7}><Router /><SmallSwitch /><Hub /><Wireless /><Bolt id="cable" /></DeviceRow>
          <DeviceName>Connections</DeviceName>
          <DeviceRow $h={36} $pl={10} $gap={5.5}><EndDevice /><Firewall /><Cloud /><ModularIcon /><Cloud lines /></DeviceRow>
        </DeviceBox>
        <CableBox>
          <CableScroll>
            <CableRow>
              <CableButton><SmallBolt /></CableButton>
              <CableButton><Wire d="M6 24Q9 9 24 6" c="#19c8f8" w={2.2} /></CableButton>
              <CableButton><Wire d="M6 24 24 6" c="#000" /></CableButton>
              <CableButton><Wire d="M8 23 9.500 22M20 11 22 9" c="#000" w={4.400} /></CableButton>
              <CableButton><Wire d="M6 24 24 6" c="#ff6a10" /></CableButton>
              <CableButton><Wire d="M18 4 17.500 4.500M13 10 9.500 13 11 13.500M16 14 20 16 17.500 18.500M12.500 24.500 12 25" c="#000" w={2.800} /></CableButton>
              <CableButton><Zigzag c="#00f" /></CableButton>
              <CableButton><Zigzag c="#f00" clock /></CableButton>
              <CableButton><Zigzag c="#f00" /></CableButton>
              <CableButton><Wire d="M4 26 26 4" c="#1bdc61" /></CableButton>
            </CableRow>
            <HScroll size={370} />
          </CableScroll>
          <CableName>Copper Straight-Through</CableName>
        </CableBox>
        <PduBox>
          <PduRow $mb={9} $pl={6}><InfoIcon s={17} />
            <Select>Scenario 0<svg width="11" height="7"><path d="M1 1 5.500 5.500 10 1" fill="none" stroke="#555" strokeWidth="1.200" /></svg></Select></PduRow>
          <PduRow $mb={6}><Button $w={73} $h={21}>New</Button><Button $w={73} $h={21} $ls={0.15}>Delete</Button></PduRow>
          <Button $w={148} $h={26} $ls={0.19}>Toggle PDU List Window</Button>
        </PduBox>
        <TableBox>
          <HeadRow>{headers.map(h => <HeadCell key={h} $pl={h === "Num" ? 10 : 4}>{h}</HeadCell>)}</HeadRow>
          {pdus.map(([s, d, c, n]) => (
            <DataRow key={n} $on={n === 0}>
              <FireCell><FireBall dim={n === 0} /></FireCell>
              <DataCell>Failed</DataCell><DataCell>{s}</DataCell><DataCell>{d}</DataCell><DataCell>ICMP</DataCell>
              <Swatch $c={c} /><DataCell>0.000</DataCell><DataCell $pl={7}>N</DataCell><DataCell $pl={5}>{n}</DataCell>
            </DataRow>
          ))}
          <TableEnd><HScroll size={447} /></TableEnd>
        </TableBox>
      </Lower>

      <Taskbar>
        <StartButton><svg width="16" height="16" viewBox="0 0 16 16"><path d="M0 2 7 1V7.500H0zM8 .9 16 0V7.500H8zM0 8.500H7V15L0 14zM8 8.500H16V16L8 15z" fill="#000" /></svg></StartButton>
        <Search>
          <svg width="17" height="17" viewBox="0 0 17 17"><circle cx="10.500" cy="6.500" r="5.500" {...line} /><path d="M6.500 10.500 1 16" {...line} /></svg>
          <SearchText $ls={-0.25}>Type here to search</SearchText><SearchArt><Landscape /></SearchArt>
        </Search>
        <TaskItem $w={50}><TaskViewIcon /></TaskItem>
        <TaskItem><Edge /></TaskItem>
        <TaskItem $run><Explorer /></TaskItem>
        <TaskItem><Store /></TaskItem>
        <TaskItem $run><Chrome /></TaskItem>
        <TaskItem><Code /></TaskItem>
        <TaskItem><AiBox>Ai</AiBox></TaskItem>
        <TaskItem><Spotify /></TaskItem>
        <TaskItem $run><Gear /></TaskItem>
        <TaskItem $run><Panel /></TaskItem>
        <TaskItem $on $run><PacketIcon s={25} /></TaskItem>
        <Spacer />
        <Tray>
          <TraySlot $w={26}><Weather /></TraySlot>
          <TraySlot $w={56} $pr={12} $fs={13.5} $ls={-0.3}>29°C</TraySlot>
          <TraySlot $w={26}><svg width="12" height="7"><path d="M1 6 6 1 11 6" {...line} /></svg></TraySlot>
          <TraySlot $w={22}><svg width="14" height="18" viewBox="0 0 14 18"><path d="M2.500 5H8.500V12.500H2.500zM9 7 11.500 6V12L9 11M3 2Q6 0 10 2M3 16Q6 18 10 16" {...line} strokeWidth="1.400" /></svg></TraySlot>
          <TraySlot $w={26}><svg width="18" height="18" viewBox="0 0 18 18"><path d="M1 3 15 1V9M1 3V14L9 15M5 8Q7 4 10 7M11 9Q8 13 5 10" {...line} /><circle cx="13" cy="13" r="4" fill="#ff9800" /></svg></TraySlot>
          <TraySlot $w={22}><svg width="18" height="14" viewBox="0 0 18 14"><path d="M6 3H16V11H4M1 1V4Q3 7 5 4V1M3 6V11M1 3H5" {...line} /><path d="M6 5H11V9H6z" fill="#111" /></svg></TraySlot>
          <TraySlot $w={26}><svg width="15" height="12" viewBox="0 0 15 12"><path d="M1 4H3L6 1V11L3 8H1zM9 4 14 9M14 4 9 9" {...line} /></svg></TraySlot>
          <TraySlot $w={30} $ls={-0.4}>ENG</TraySlot>
          <Clock>20:42<br />25/05/2023</Clock>
          <TraySlot $w={48} $pr={5}><svg width="26" height="26" viewBox="0 0 26 26"><path d="M1 3H16V15H8L5 18V15H1z" fill="#111" /><path d="M4 6.500H13M4 9.500H13M4 12.500H9" stroke="#ddd" /><circle cx="17" cy="17.500" r="7.500" fill="#d3d3d3" stroke="#555" /><text x="17" y="22" fontSize="12" textAnchor="middle" fontFamily="Open Sans">2</text></svg></TraySlot>
        </Tray>
      </Taskbar>

      <LogicalTab>
        <svg width="130" height="72" viewBox="0 75 130 72">
          <defs>
            <linearGradient id="fade"><stop offset=".62" stopColor="#fff" /><stop offset="1" stopColor="#fff" stopOpacity="0" /></linearGradient>
            <linearGradient id="tab" x2="1"><stop stopColor="#fefdf5" /><stop offset="1" stopColor="#f9df7c" /></linearGradient>
            <linearGradient id="back" x2="1"><stop stopColor="#999" /><stop offset=".6" stopColor="#eee" /><stop offset="1" stopColor="#fff" /></linearGradient>
          </defs>
          <path d="M42 102H79V125Q78 130 72 130H50L42 120z" fill="url(#back)" stroke="#555" /><path d="M50 103H68V125H55z" fill="#8a8a8a" stroke="#666" /><path d="M54 106H66M54 113H66M54 120H66" stroke="#a4a4a4" strokeWidth="3" />
          <path d="M0 76H8V102H0z" fill="#f0f0f0" />
          <path d="M130 78H8Q1 78 1 85V106Q1 113 8 113H16V109H41V98H130z" fill="url(#fade)" />
          <path d="M15 108H49Q55 108 55 115V138Q54 145 47 145H23Q15 145 15 137z" fill="url(#tab)" />
          <path d="M8 77Q1 78 1 85V106Q1 113 8 113.500H15V137Q15 145 23 145.500H47Q55 145 55 137V115Q55 109 48 109H41V99" fill="none" stroke="#444" strokeWidth="1.300" />
          <path d="M33 118 26 129M35 118 41 137" stroke="#555" /><g fill="#fff" stroke="#555"><ellipse cx="34.500" cy="117" rx="3.500" ry="2.800" /><ellipse cx="25" cy="130.500" rx="3.500" ry="2.800" /><ellipse cx="41.500" cy="139" rx="3.500" ry="2.800" /></g>
        </svg>
        <TabName $x={21} $y={6}>Logical</TabName>
      </LogicalTab>
      <RealtimeTab>
        <svg width="126" height="72" viewBox="1240 556 126 72">
          <defs><linearGradient id="fade2"><stop stopColor="#fbe48a" stopOpacity="0" /><stop offset=".65" stopColor="#fff" /></linearGradient><linearGradient id="tab2" x2="1" y2=".5"><stop stopColor="#f7dc70" /><stop offset="1" stopColor="#fffdf2" /></linearGradient></defs>
          <path d="M1311.500 596V566Q1312 559 1319 558.500H1345Q1352 559 1352 566V596z" fill="#f3f3f3" stroke="#555" strokeWidth="1.300" />
          <circle cx="1333" cy="576" r="7.500" fill="#ddd" stroke="#777" strokeWidth="1.500" /><path d="M1328 573H1338V577H1328z" fill="#333" /><path d="M1333 566V569M1327 568 1329 570M1325 583H1345" stroke="#666" strokeWidth="2" />
          <path d="M1328 590H1358Q1365 590 1365 597V620L1360 626H1240V605H1288V590z" fill="url(#fade2)" />
          <path d="M1288 606V580Q1289 573 1296 573H1320Q1327 574 1327 581V606z" fill="url(#tab2)" />
          <path d="M1240 604H1288V580Q1289 573.500 1296 573.500H1320Q1327 574 1327.500 581V591Q1329 590 1332 590H1358Q1365 590 1365 597V618L1359 627" fill="none" stroke="#444" strokeWidth="1.300" />
          <circle cx="1306.500" cy="591" r="9.300" fill="#fff9dd" stroke="#776d48" strokeWidth="1.200" /><circle cx="1306.500" cy="591" r="7" fill="#f8ebbb" stroke="#a09468" strokeWidth=".8" /><path d="M1307 587V592H1302" fill="none" stroke="#555" />
        </svg>
        <TabName $x={21} $y={49}>Realtime</TabName>
      </RealtimeTab>
    </Desktop>
  );
}
